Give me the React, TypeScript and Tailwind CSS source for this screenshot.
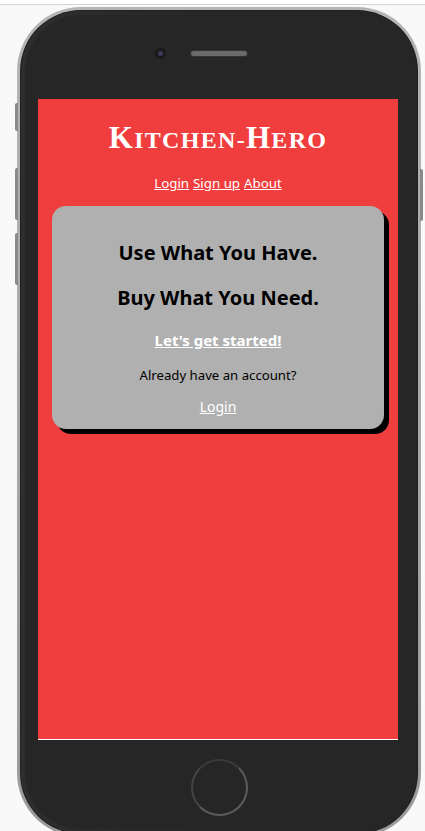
import React from "react";

export default function App() {
  return (
    <div className="relative h-[831px] w-[425px] overflow-hidden bg-[#f9f9f9]" style={{ fontFamily: '"Noto Sans", "Open Sans", sans-serif' }}>
      <div className="h-[5px] border-b border-[#d4d4d4] bg-white" />
      {/* side buttons */}
      <div className="absolute left-[15px] top-[103px] h-[28px] w-[3px] rounded-l-[2px] bg-[#8a8a8a]" />
      <div className="absolute left-[15px] top-[168px] h-[52px] w-[3px] rounded-l-[2px] bg-[#8a8a8a]" />
      <div className="absolute left-[15px] top-[233px] h-[52px] w-[3px] rounded-l-[2px] bg-[#8a8a8a]" />
      <div className="absolute left-[420px] top-[169px] h-[52px] w-[3px] rounded-r-[2px] bg-[#8a8a8a]" />
      {/* phone */}
      <div className="ml-[17px] mt-[2px] h-[830px] w-[404px] rounded-[64px] bg-gradient-to-b from-[#b5b5b5] to-[#9a9a9a] p-[3px]">
        <div className="h-full w-full rounded-[61px] bg-[#1f1f1f] p-[1px]">
          <div className="flex h-full w-full flex-col rounded-[60px] bg-gradient-to-r from-[#2e2e2e] via-[#262626] to-[#262626] p-[4px]">
            <div className="flex h-full w-full flex-col rounded-[56px] bg-[#262626]">
              <div className="flex h-[84px] items-start pl-[130px] pt-[33px]">
                <div className="flex h-[11px] w-[11px] items-center justify-center rounded-full bg-[#1b1b1e]">
                  <div className="h-[5px] w-[5px] rounded-full bg-[#41375a]" />
                </div>
                <div
                  className="ml-[24px] mt-[2px] h-[7px] w-[58px] rounded-full border border-[#333] bg-[#4a4a4a]"
                  style={{ backgroundImage: "radial-gradient(#6a6a6a 0.8px, transparent 0.9px)", backgroundSize: "2px 2px" }}
                />
              </div>
              <div className="ml-[13px] flex h-[641px] w-[360px] flex-col items-center border-b border-white bg-[#f03d3d] pt-[19px]">
                <h1
                  className="flex items-baseline font-bold leading-[40px] tracking-[1.3px] text-white"
                  style={{ fontFamily: '"Liberation Serif", serif' }}
                >
                  <span className="text-[31px]">K</span>
                  <span className="text-[24px]">ITCHEN-</span>
                  <span className="text-[31px]">H</span>
                  <span className="text-[24px]">ERO</span>
                </h1>
                <nav className="mt-[14px] flex gap-[4px] text-[13.3px] leading-[18px] text-white">
                  <a className="underline">Login</a>
                  <a className="underline">Sign up</a>
                  <a className="underline">About</a>
                </nav>
                <div className="mt-[14px] flex w-[332px] flex-col items-center rounded-[14px] bg-[#b0b0b0] pb-[12px] pt-[33px] shadow-[5px_5px_0_#000]">
                  <p className="text-[20px] font-bold leading-[28px] text-black">Use What You Have.</p>
                  <p className="mt-[17px] text-[20px] font-bold leading-[28px] text-black">Buy What You Need.</p>
                  <a className="mt-[17px] text-[15px] font-bold leading-[22px] text-white underline">Let's get started!</a>
                  <p className="mt-[14px] text-[13.2px] leading-[20px] text-black">Already have an account?</p>
                  <a className="mt-[12px] text-[14px] leading-[20px] text-white underline">Login</a>
                </div>
              </div>
              <div className="flex flex-1 items-start justify-center pt-[19px]">
                <div className="h-[57px] w-[57px] rounded-full border-2 border-[#5c5c5c] border-t-[#3a3a3a] border-l-[#444] bg-[#262626]" />
              </div>
            </div>
          </div>
        </div>
      </div>
    </div>
  );
}
